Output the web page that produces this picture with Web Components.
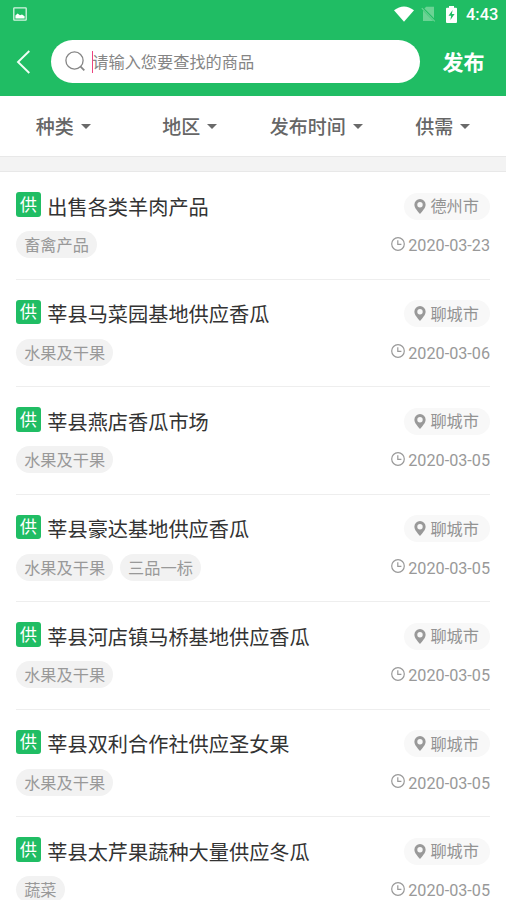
<!DOCTYPE html>
<html lang="zh-CN">
<head>
<meta charset="utf-8">
<title>供需列表</title>
<style>
html,body{margin:0;height:900px;overflow:hidden;background:#fff}
body{font-family:Roboto,"Noto Sans CJK SC",sans-serif}
</style>
</head>
<body>
<market-page></market-page>
<script>
const define = (name, html, setup) => customElements.define(name, class extends HTMLElement {
  constructor() {
    super();
    this.attachShadow({ mode: 'open' }).innerHTML = html;
  }
  connectedCallback() { if (setup) setup(this, this.shadowRoot); }
});

define('status-bar', `
<style>
:host{display:flex;align-items:center;height:28px;padding:0 9px 0 13px;color:#fff;box-sizing:border-box}
svg{display:block;flex:none}
.space{flex:1}
.time{font-size:16.4px;line-height:20px;font-weight:500;width:31px;white-space:nowrap;margin-top:2px}
</style>
<svg width="14" height="14" viewBox="0 0 14 14"><rect x=".8" y=".8" width="12.4" height="12.4" rx=".6" fill="none" stroke="#d5f5e2" stroke-width="1.3"/><path d="M2.4 11.6V8.4L4.6 6.6 7 8.3l2-.7 2.6 1.6v2.4z" fill="#fff"/></svg>
<div class="space"></div>
<svg width="20" height="16" viewBox="0 0 20 16"><path d="M0 4.2Q10-3.4 20 4.2L10 15.8z" fill="#fff"/></svg>
<svg width="15" height="16" viewBox="0 0 15 16" style="margin-left:7px"><path d="M5.2.8H13V15H2V4z" fill="#6bd394"/><path d="M.8 1.5l13.4 13.7" stroke="#20bd64" stroke-width="2.4"/><path d="M.8 2.2l13 13.2" stroke="#6bd394" stroke-width="1.1"/></svg>
<svg width="11" height="17" viewBox="0 0 11 17" style="margin:0 9px 0 10px"><path d="M3 0h5v1.8h2Q11 1.8 11 2.8V16q0 1-1 1H1q-1 0-1-1V2.8q0-1 1-1h2z" fill="#fff"/><path d="M6.6 4L2.5 9.8h2.6L4.4 14l4.2-5.9H5.9z" fill="#20bd64"/></svg>
<span class="time"><slot></slot></span>`);

define('search-header', `
<style>
:host{display:flex;align-items:center;height:68px;box-sizing:border-box;padding:0 21.5px 0 16px}
svg{display:block;flex:none}
.field{display:flex;align-items:center;box-sizing:border-box;width:369px;height:43px;border-radius:22px;background:#fff;margin:-1px 0 0 20px;padding-left:14px}
.caret{width:1.3px;height:22px;background:#ec4380;margin:0 -1px 0 6px}
.hint{font-size:16.2px;line-height:22px;color:#858585;white-space:nowrap;padding-top:2px}
.publish{margin-left:auto;font-size:21px;font-weight:700;line-height:28px;color:#fff;white-space:nowrap;padding-top:2px}
</style>
<svg width="15" height="24" viewBox="0 0 15 24"><path d="M13.3 1L2 12l11.3 11" fill="none" stroke="#effff5" stroke-width="1.9"/></svg>
<div class="field">
<svg width="21" height="21" viewBox="0 0 21 21"><g fill="none" stroke="#858585" stroke-width="1.3"><circle cx="9.5" cy="9.5" r="8.6"/><path d="M15.6 15.7l3.7 3.6" stroke-width="1.8"/></g></svg>
<span class="caret"></span><span class="hint"><slot></slot></span></div>
<span class="publish"><slot name="action"></slot></span>`);

define('filter-item', `
<style>
:host{display:flex;align-items:center;justify-content:center;gap:7px;font-size:19px;font-weight:500;line-height:26px;color:#666;white-space:nowrap}
span{padding-top:3px}
i{width:0;height:0;border:5.3px solid transparent;border-top:5.6px solid #6a6a6a;border-bottom:0}
</style><span><slot></slot></span><i></i>`);

define('filter-bar', `
<style>
:host{display:grid;grid-template-columns:repeat(4,1fr);height:60px}
</style><slot></slot>`);

define('type-badge', `
<style>
:host{display:flex;align-items:center;justify-content:center;width:24.5px;height:24.5px;border-radius:3px;background:#20bd64;color:#fff;font-size:17.2px;line-height:24px;flex:none}
</style><slot></slot>`);

define('tag-chip', `
<style>
:host{display:block;height:27px;border-radius:14px;background:#f2f2f2;color:#999;font-size:16.2px;line-height:29px;padding:0 8.2px;white-space:nowrap}
</style><slot></slot>`);

define('place-chip', `
<style>
:host{display:flex;align-items:center;gap:4px;height:27px;border-radius:14px;background:#f8f8f8;color:#939393;font-size:16.2px;line-height:27px;padding:0 11px 0 10px;white-space:nowrap}
svg{display:block}
span{padding-top:1px}
</style>
<svg width="12" height="15" viewBox="0 0 12 15"><path fill-rule="evenodd" d="M6 0a5.6 5.6 0 0 1 5.6 5.7C11.6 9 8.2 12.2 6 15 3.8 12.2.4 9 .4 5.7A5.6 5.6 0 0 1 6 0zm0 3a2.7 2.7 0 1 0 0 5.4A2.7 2.7 0 0 0 6 3z" fill="#999"/></svg>
<span><slot></slot></span>`);

define('date-label', `
<style>
:host{display:flex;align-items:center;gap:3.5px;color:#999;font-size:16.2px;line-height:27px;white-space:nowrap}
svg{display:block;margin-top:-2px}
span{padding-top:2px}
</style>
<svg width="14" height="14" viewBox="0 0 14 14"><g fill="none" stroke="#999" stroke-width="1.2"><circle cx="7" cy="7" r="6.3"/><path d="M6.8 3.2v4.2h3.6"/></g></svg>
<span><slot></slot></span>`);

define('supply-item', `
<style>
:host{display:block;box-sizing:border-box;height:107.5px;margin:0 16px;padding-top:20px;border-bottom:1px solid #eee}
.row{display:flex;align-items:center;justify-content:space-between}
.top{height:28px}
.bottom{height:27px;margin-top:11px}
.name,.tags{display:flex}
.name{align-items:center;gap:6.8px}
.tags{gap:6.6px}
type-badge{margin-top:-3px}
h2{margin:0;font-size:20.2px;font-weight:400;line-height:28px;color:#333;white-space:nowrap;padding-top:3px}
</style>
<div class="row top"><div class="name"><type-badge>供</type-badge><h2><slot></slot></h2></div><place-chip></place-chip></div>
<div class="row bottom"><div class="tags"></div><date-label></date-label></div>`,
(host, root) => {
  root.querySelector('place-chip').textContent = host.getAttribute('place');
  root.querySelector('date-label').textContent = host.getAttribute('date');
  root.querySelector('.tags').replaceChildren(...host.getAttribute('tags').split(',').map(t => {
    const chip = document.createElement('tag-chip');
    chip.textContent = t;
    return chip;
  }));
});

define('market-page', `
<style>
:host{display:block;width:506px;height:900px;overflow:hidden;background:#fff}
header{background:#20bd64;height:96px}
.band{box-sizing:border-box;height:16px;background:#f3f3f3;border-top:1px solid #e8e8e8;border-bottom:1px solid #e8e8e8}
</style>
<header><status-bar>4:43</status-bar>
<search-header>请输入您要查找的商品<span slot="action">发布</span></search-header></header>
<filter-bar><filter-item>种类</filter-item><filter-item>地区</filter-item><filter-item>发布时间</filter-item><filter-item>供需</filter-item></filter-bar>
<div class="band"></div>
<main>
<supply-item place="德州市" date="2020-03-23" tags="畜禽产品">出售各类羊肉产品</supply-item>
<supply-item place="聊城市" date="2020-03-06" tags="水果及干果">莘县马菜园基地供应香瓜</supply-item>
<supply-item place="聊城市" date="2020-03-05" tags="水果及干果">莘县燕店香瓜市场</supply-item>
<supply-item place="聊城市" date="2020-03-05" tags="水果及干果,三品一标">莘县豪达基地供应香瓜</supply-item>
<supply-item place="聊城市" date="2020-03-05" tags="水果及干果">莘县河店镇马桥基地供应香瓜</supply-item>
<supply-item place="聊城市" date="2020-03-05" tags="水果及干果">莘县双利合作社供应圣女果</supply-item>
<supply-item place="聊城市" date="2020-03-05" tags="蔬菜">莘县太芹果蔬种大量供应冬瓜</supply-item>
</main>`);
</script>
</body>
</html>
